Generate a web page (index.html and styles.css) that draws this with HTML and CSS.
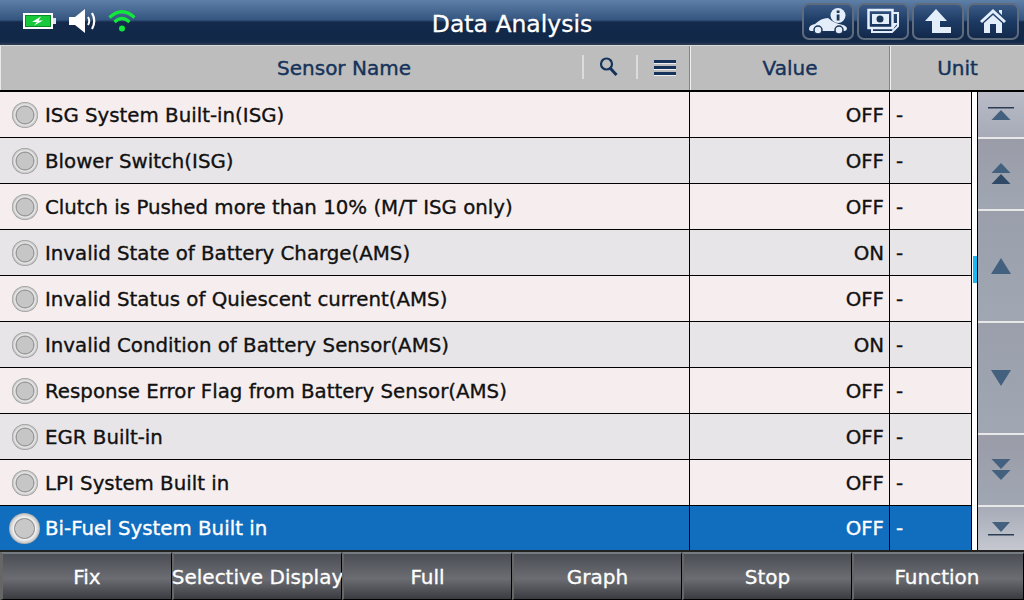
FILE: index.html
```html
<html>
<head>
	<title>Data Analysis</title>
	<link rel="stylesheet" href="styles.css">
</head>
<body>
	<header class="topbar">
		<div class="status">
			<svg class="ico-batt" width="34" height="18" viewBox="0 0 34 18">
				<rect x="1" y="2" width="28" height="14" fill="#0c8a2a" stroke="#fff" stroke-width="2"/>
				<rect x="3" y="4" width="24" height="10" fill="#19c93c"/>
				<rect x="30" y="6" width="3" height="6" fill="#dfe6ee"/>
				<path d="M18 4.500 L9 10 L14 10 L11 13.500 L20 8.500 L15.500 8.500 Z" fill="#fff"/>
			</svg>
			<svg class="ico-sound" width="28" height="24" viewBox="0 0 28 24">
				<path d="M0 8 H6 L16 0 V24 L6 16 H0 Z" fill="#fff"/>
				<path d="M19 8 Q21.500 12 19 16" fill="none" stroke="#fff" stroke-width="2"/>
				<path d="M23 4 Q27.500 12 23 20" fill="none" stroke="#fff" stroke-width="2.200"/>
			</svg>
			<svg class="ico-wifi" width="28" height="24" viewBox="0 0 28 24">
				<path d="M1.500 8.500 Q14 -3 26.500 8.500" fill="none" stroke="#12e83a" stroke-width="3.200"/>
				<path d="M6.500 13 Q14 6 21.500 13" fill="none" stroke="#12e83a" stroke-width="3.200"/>
				<circle cx="14" cy="19.500" r="3" fill="#12e83a"/>
			</svg>
		</div>
		<h1 class="title">Data Analysis</h1>
		<nav class="topbtns">
			<a class="topbtn">
				<svg width="40" height="26" viewBox="0 0 40 26">
					<path d="M1 21 Q1 17 7 16 Q13 10 20 10 L24 13 Q27 15 31 16 Q38 17 39 20 Q39 23 36 23 H4 Q1 23 1 21 Z" fill="#e4eefa"/>
					<circle cx="10" cy="22" r="4" fill="#e4eefa" stroke="#1b3556" stroke-width="1.500"/>
					<circle cx="31" cy="22" r="4" fill="#e4eefa" stroke="#1b3556" stroke-width="1.500"/>
					<circle cx="30" cy="7.500" r="7.500" fill="#e4eefa"/>
					<rect x="28.700" y="6.500" width="2.800" height="6" fill="#1b3556"/>
					<rect x="28.700" y="2.500" width="2.800" height="2.500" fill="#1b3556"/>
				</svg>
			</a>
			<a class="topbtn">
				<svg width="32" height="26" viewBox="0 0 32 26">
					<path d="M5 21 V24 H25 L31 18 V5 H26" fill="none" stroke="#e4eefa" stroke-width="2"/>
					<path d="M31 15 H25 V22 Z" fill="#e4eefa"/>
					<rect x="1.500" y="2" width="24" height="18" fill="none" stroke="#e4eefa" stroke-width="2.500"/>
					<rect x="5" y="6" width="17" height="10" fill="#e4eefa"/>
					<circle cx="13" cy="11" r="3.500" fill="#1b3556"/>
				</svg>
			</a>
			<a class="topbtn">
				<svg width="26" height="24" viewBox="0 0 26 24">
					<path d="M11 0 L22 12 H15 V18 H26 V24 H7 V12 H0 Z" fill="#e4eefa"/>
				</svg>
			</a>
			<a class="topbtn">
				<svg width="26" height="26" viewBox="0 0 26 26">
					<path d="M13 1 L26 13 L24 15 L13 5 L2 15 L0 13 Z M19 2 H22 V7 L19 4 Z" fill="#e4eefa"/>
					<path d="M4 15 L13 7 L22 15 V25 H16 V16 H10 V25 H4 Z" fill="#e4eefa"/>
				</svg>
			</a>
		</nav>
	</header>

	<div class="thead">
		<div class="th th-name">
			<span class="th-label">Sensor Name</span>
			<span class="th-tools">
				<span class="sep"></span>
				<svg class="tool-search" width="20" height="22" viewBox="0 0 20 22">
					<circle cx="7.500" cy="8" r="5.500" fill="none" stroke="#15335a" stroke-width="2.200"/>
					<path d="M11.500 12.500 L17.500 19" stroke="#15335a" stroke-width="3"/>
				</svg>
				<span class="sep"></span>
				<span class="burger"><i></i><i></i><i></i></span>
			</span>
		</div>
		<div class="th th-value">Value</div>
		<div class="th th-unit">Unit</div>
	</div>

	<main class="body">
		<div class="rows">
			<div class="row"><span class="name"><span class="radio"></span>ISG System Built-in(ISG)</span><span class="val">OFF</span><span class="unit">-</span></div>
			<div class="row alt"><span class="name"><span class="radio"></span>Blower Switch(ISG)</span><span class="val">OFF</span><span class="unit">-</span></div>
			<div class="row"><span class="name"><span class="radio"></span>Clutch is Pushed more than 10% (M/T ISG only)</span><span class="val">OFF</span><span class="unit">-</span></div>
			<div class="row alt"><span class="name"><span class="radio"></span>Invalid State of Battery Charge(AMS)</span><span class="val">ON</span><span class="unit">-</span></div>
			<div class="row"><span class="name"><span class="radio"></span>Invalid Status of Quiescent current(AMS)</span><span class="val">OFF</span><span class="unit">-</span></div>
			<div class="row alt"><span class="name"><span class="radio"></span>Invalid Condition of Battery Sensor(AMS)</span><span class="val">ON</span><span class="unit">-</span></div>
			<div class="row"><span class="name"><span class="radio"></span>Response Error Flag from Battery Sensor(AMS)</span><span class="val">OFF</span><span class="unit">-</span></div>
			<div class="row alt"><span class="name"><span class="radio"></span>EGR Built-in</span><span class="val">OFF</span><span class="unit">-</span></div>
			<div class="row"><span class="name"><span class="radio"></span>LPI System Built in</span><span class="val">OFF</span><span class="unit">-</span></div>
			<div class="row sel"><span class="name"><span class="radio big"></span>Bi-Fuel System Built in</span><span class="val">OFF</span><span class="unit">-</span></div>
		</div>
		<div class="gutter"><span class="thumb"></span></div>
		<div class="scroll">
			<div class="sbtn s-end top">
				<svg width="26" height="16" viewBox="0 0 26 16"><rect y="0" width="26" height="1.500" fill="#2a3d55"/><path d="M13 3 L22.500 13 H3.500 Z" fill="#44607f"/></svg>
			</div>
			<div class="sbtn s-page">
				<svg width="20" height="22" viewBox="0 0 20 22"><path d="M10 0 L19.500 10 H0.500 Z" fill="#44607f"/><path d="M10 11 L19.500 21 H0.500 Z" fill="#2f4966"/></svg>
			</div>
			<div class="sbtn s-line">
				<svg width="20" height="16" viewBox="0 0 20 16"><path d="M10 0 L20 16 H0 Z" fill="#44607f"/></svg>
			</div>
			<div class="sbtn s-line">
				<svg width="20" height="16" viewBox="0 0 20 16"><path d="M10 16 L20 0 H0 Z" fill="#44607f"/></svg>
			</div>
			<div class="sbtn s-page">
				<svg width="20" height="22" viewBox="0 0 20 22"><path d="M10 10 L19.500 0 H0.500 Z" fill="#44607f"/><path d="M10 21 L19.500 11 H0.500 Z" fill="#44607f"/></svg>
			</div>
			<div class="sbtn s-end bottom">
				<svg width="26" height="14" viewBox="0 0 26 14"><path d="M13 10 L22 0 H4 Z" fill="#44607f"/><rect y="12" width="26" height="1.500" fill="#2a3d55"/></svg>
			</div>
		</div>
	</main>

	<footer class="bottombar">
		<a class="fbtn">Fix</a>
		<a class="fbtn">Selective Display</a>
		<a class="fbtn">Full</a>
		<a class="fbtn">Graph</a>
		<a class="fbtn">Stop</a>
		<a class="fbtn">Function</a>
	</footer>
</body>
</html>
```

FILE: styles.css
```css
* {box-sizing: border-box; font-family: "DejaVu Sans", Verdana, sans-serif;}
html, body {margin: 0; padding: 0;}
body {width: 1024px; height: 600px; overflow: hidden; background-color: #000; display: flex; flex-direction: column;}

.topbar {height: 45px; flex: none; display: flex; align-items: center; position: relative; justify-content: space-between;
	background: linear-gradient(#5d7fa8 0, #33557f 20px, #14294b 22px, #112848 42px, #2a3a52 44px);}
.status {display: flex; align-items: center; margin-left: 23px; height: 40px; margin-top: -4px;}
.ico-batt {margin-right: 12px;}
.ico-sound {margin-right: 11px;}
.title {position: absolute; left: 0; right: 0; margin: 0; text-align: center; font-size: 23.500px; font-weight: normal; color: #fff; top: 9px; line-height: 30px; -webkit-text-stroke: .3px #fff;}
.topbtns {display: flex; gap: 3px; margin-right: 5px; margin-top: -3px;}
.topbtn {width: 52px; height: 37px; display: flex; align-items: center; justify-content: center; border-radius: 7px; border: 2px solid #5f6c7d;
	background: linear-gradient(#3a5a86, #1c3a63 50%, #14294b);}

.thead {height: 47px; flex: none; display: flex; background-color: #bdbdbd; border-top: 1px solid #d8d8d8; border-bottom: 2px solid #000; color: #15335a; font-size: 20px; -webkit-text-stroke: .4px #15335a;}
.th {display: flex; align-items: center; justify-content: center; height: 100%;}
.th-name {width: 690px; border-left: 1px solid #e8e8e8; position: relative; border-right: 1px solid #858585;}
.th-label {margin-right: 2px;}
.th-tools {position: absolute; left: 581px; top: 9px; display: flex; align-items: center; height: 24px;}
.sep {width: 2px; height: 24px; background-color: #dcdcdc;}
.tool-search {margin: 0 17px 0 15px;}
.burger {display: flex; flex-direction: column; gap: 3px; margin-left: 16px;}
.burger i {display: block; width: 22px; height: 3px; background-color: #15335a; box-shadow: 0 1px 0 #eee;}
.th-value {width: 200px; border-left: 1px solid #eee; border-right: 1px solid #858585;}
.th-unit {flex: 1; border-left: 1px solid #eee;}

.body {flex: 1; display: flex; min-height: 0; background-color: #000;}
.rows {width: 972px; display: flex; flex-direction: column; border-right: 1px solid #000;}
.row {height: 46px; flex: none; display: flex; align-items: stretch; font-size: 19.800px; color: #111; background-color: #f6eeee; border-bottom: 1px solid #000; -webkit-text-stroke: .35px #111;}
.row.alt {background-color: #e8e5e8;}
.row.sel {height: 44px; border-bottom: 0; background-color: #116dbe; color: #fff; -webkit-text-stroke: .35px #fff;}
.name {width: 690px; display: flex; align-items: center; padding: 1px 0 0 12px; border-right: 1px solid #000; white-space: nowrap;}
.val {width: 200px; display: flex; align-items: center; justify-content: flex-end; padding: 1px 5px 0 0; border-right: 1px solid #000;}
.unit {flex: 1; display: flex; align-items: center; padding: 1px 0 0 6px;}
.radio {width: 26px; height: 26px; border-radius: 50%; margin-right: 7px; flex: none;
	background: radial-gradient(circle at 50% 50%, #c6c6c6 0 8px, #9a9a9a 8.500px 9px, #ececec 10px, #c4c4c4 12px, #8a8a8a 13px);}
.radio.big {width: 31px; height: 31px; margin-left: -3px; margin-right: 5px;
	background: radial-gradient(circle at 50% 50%, #c8c8c8 0 9px, #9a9a9a 9.500px 10px, #f2f2f2 11px, #d0d0d0 14px, #a8a8a8 15.500px);}

.gutter {width: 5px; background-color: #fff; position: relative;}
.thumb {position: absolute; left: 1px; top: 164px; width: 4px; height: 27px; background-color: #1cb6f2;}

.scroll {width: 47px; display: flex; flex-direction: column; gap: 2px; background-color: #e8e8e8; border-left: 1px solid #000;}
.sbtn {display: flex; align-items: center; justify-content: center; flex: none;}
.s-end {height: 45px; background: linear-gradient(#b9bcc7, #a6abb7);}
.s-end.bottom {height: 43px; background: linear-gradient(#a6abb7, #c5c8d0);}
.s-page {height: 70px; background: linear-gradient(#9a9ca8, #a0a7b2);}
.s-line {height: 110px; background: linear-gradient(#9a9fab, #a0a7b2);}

.bottombar {height: 50px; flex: none; display: flex; background-color: #111; border-top: 2px solid #222;}
.fbtn {width: 170px; display: flex; align-items: center; justify-content: center; font-size: 20px; color: #fff; white-space: nowrap; -webkit-text-stroke: .3px #fff;
	border: 1px solid #000; border-top: 2px solid #777b82; border-left: 2px solid #666; background: linear-gradient(#4c4e55, #6b6d73 55%, #3a3b40);}
.fbtn:first-child {width: 172px; border-left-width: 3px;}
.fbtn:last-child {width: 172px; padding-right: 3px;}
```
